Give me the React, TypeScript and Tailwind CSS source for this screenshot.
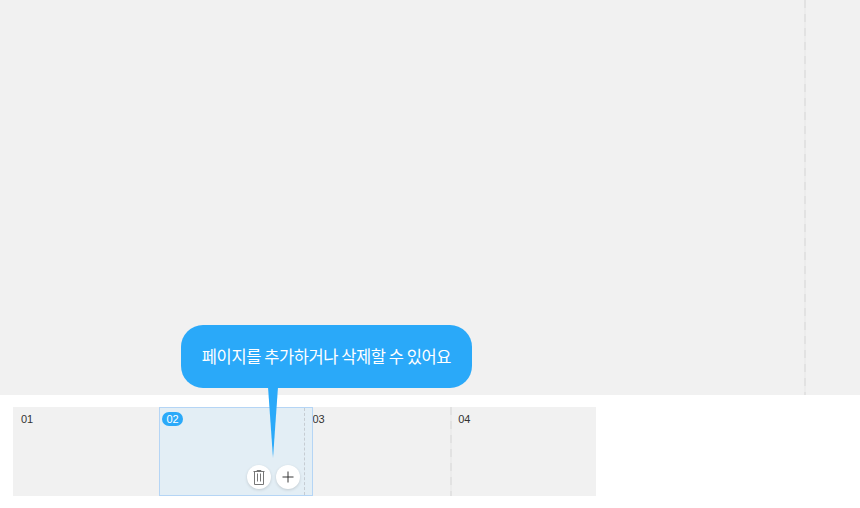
const pages = ["01", "02", "03", "04"];

const dashV = "bg-[repeating-linear-gradient(to_bottom,#e2e2e2_0,#e2e2e2_8px,#ececec_8px,#ececec_14px)]";

function TrashIcon() {
  return (
    <svg width="12" height="15" viewBox="0 0 12 15" fill="none" stroke="#777" strokeWidth="1">
      <path d="M0.5 1.5h11" />
      <path d="M4 1.5V0.5h4v1" />
      <path d="M1.5 1.5v13h9v-13" />
      <path d="M4.5 3.5v8M7.5 3.5v8" />
    </svg>
  );
}

function PlusIcon() {
  return (
    <svg width="12" height="12" viewBox="0 0 12 12" fill="none" stroke="#222" strokeWidth="0.9">
      <path d="M6 0.5v11M0.5 6h11" />
    </svg>
  );
}

function Tooltip() {
  return (
    <div className="absolute left-[181px] top-[325px] z-20 flex h-[63px] w-[291px] items-center justify-center rounded-[22px] bg-[#2aa9f9]">
      <span className="text-[16.5px] tracking-[-0.42px] font-normal text-white [font-family:'Noto_Sans_CJK_KR','Noto_Sans',sans-serif]">
        페이지를 추가하거나 삭제할 수 있어요
      </span>
      <svg className="absolute left-[87px] top-[62px]" width="10" height="72" viewBox="0 0 10 72">
        <path d="M0 0h10L5 71z" fill="#2aa9f9" />
      </svg>
    </div>
  );
}

export default function App() {
  return (
    <div className="relative flex h-[508px] w-[860px] flex-col overflow-hidden bg-white [font-family:'Liberation_Sans',Arial,sans-serif]">
      <div className="flex h-[395px] justify-end bg-[#f1f1f1] pr-[54px]">
        <div className={`h-full w-[2px] ${dashV}`} />
      </div>

      <div className="relative ml-[13px] mt-3 flex h-[89px] w-[583px]">
        {pages.map((p, i) => (
          <div
            key={p}
            className="relative h-full flex-1 bg-[#f1f1f1] pl-2 pt-[5px] text-[11px] leading-[14px] text-[#333]"
          >
            {i > 0 && <div className={`absolute left-0 top-0 h-full w-[2px] ${dashV}`} />}
            {i !== 1 && p}
          </div>
        ))}

        <div className="absolute left-[146px] top-0 z-10 h-[89px] w-[154px] border border-[#b5d5f5] bg-[#e3eef5]">
          <div className="absolute left-[144px] top-0 h-full border-l border-dashed border-[#c6ccd2]" />
          <span className="absolute left-[2px] top-[4px] flex h-[14px] w-[21px] items-center justify-center rounded-full bg-[#2aa9f9] text-[11px] text-white">
            02
          </span>
          <div className="absolute left-[87px] top-[57px] flex gap-[5px]">
            <button className="flex h-6 w-6 items-center justify-center rounded-full bg-white shadow-[0_1px_3px_rgba(0,0,0,0.15)]">
              <TrashIcon />
            </button>
            <button className="flex h-6 w-6 items-center justify-center rounded-full bg-white shadow-[0_1px_3px_rgba(0,0,0,0.15)]">
              <PlusIcon />
            </button>
          </div>
        </div>
      </div>

      <Tooltip />
    </div>
  );
}
